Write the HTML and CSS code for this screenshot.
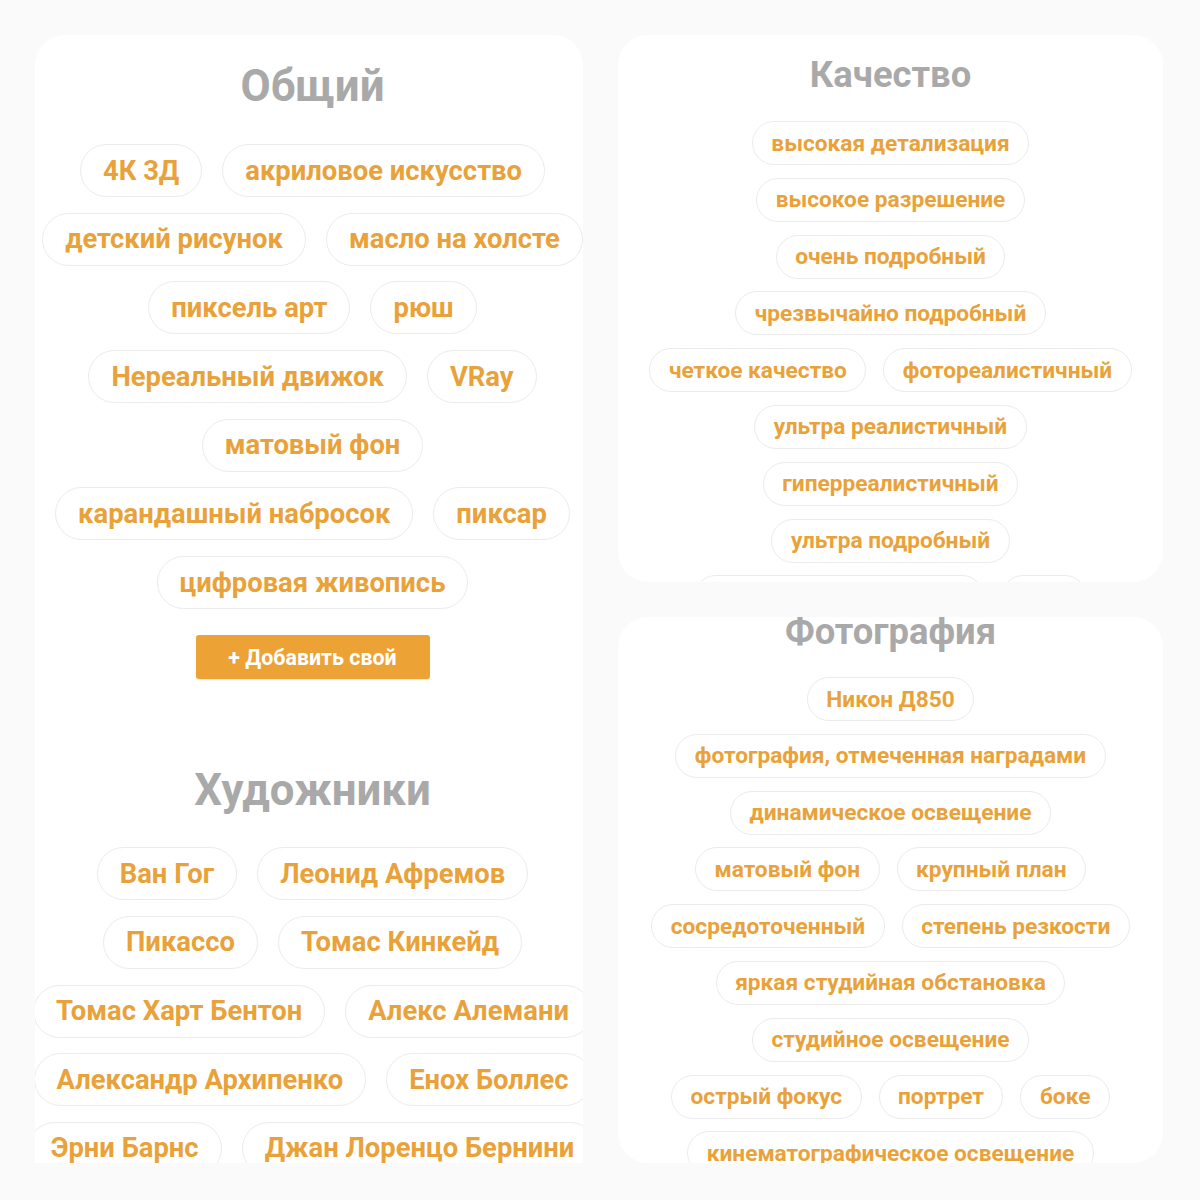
FILE: index.html
```html
<!DOCTYPE html>
<html lang="ru">
<head>
<meta charset="utf-8">
<title>Теги</title>
<link rel="stylesheet" href="styles.css">
</head>
<body>
<div class="page">
  <section class="card card-left">
    <div class="left-inner">
      <h2 class="title-lg title-general">Общий</h2>
      <div class="rows rows-lg">
        <div class="row"><span class="chip">4К 3Д</span><span class="chip">акриловое искусство</span></div>
        <div class="row"><span class="chip">детский рисунок</span><span class="chip">масло на холсте</span></div>
        <div class="row"><span class="chip">пиксель арт</span><span class="chip">рюш</span></div>
        <div class="row"><span class="chip">Нереальный движок</span><span class="chip">VRay</span></div>
        <div class="row"><span class="chip">матовый фон</span></div>
        <div class="row"><span class="chip">карандашный набросок</span><span class="chip">пиксар</span></div>
        <div class="row"><span class="chip">цифровая живопись</span></div>
      </div>
      <div class="btn-wrap"><button class="add-btn">+ Добавить свой</button></div>
      <h2 class="title-lg title-artists">Художники</h2>
      <div class="rows rows-lg">
        <div class="row"><span class="chip">Ван Гог</span><span class="chip">Леонид Афремов</span></div>
        <div class="row"><span class="chip">Пикассо</span><span class="chip">Томас Кинкейд</span></div>
        <div class="row"><span class="chip">Томас Харт Бентон</span><span class="chip">Алекс Алемани</span></div>
        <div class="row"><span class="chip">Александр Архипенко</span><span class="chip">Енох Боллес</span></div>
        <div class="row"><span class="chip">Эрни Барнс</span><span class="chip">Джан Лоренцо Бернини</span></div>
      </div>
    </div>
  </section>
  <div class="col-right">
    <section class="card card-quality">
      <h2 class="title-sm">Качество</h2>
      <div class="rows rows-sm">
        <div class="row"><span class="chip">высокая детализация</span></div>
        <div class="row"><span class="chip">высокое разрешение</span></div>
        <div class="row"><span class="chip">очень подробный</span></div>
        <div class="row"><span class="chip">чрезвычайно подробный</span></div>
        <div class="row"><span class="chip">четкое качество</span><span class="chip">фотореалистичный</span></div>
        <div class="row"><span class="chip">ультра реалистичный</span></div>
        <div class="row"><span class="chip">гиперреалистичный</span></div>
        <div class="row"><span class="chip">ультра подробный</span></div>
        <div class="row row-peek"><span class="chip chip-peek chip-peek-wide"></span><span class="chip chip-peek chip-peek-narrow"></span></div>
      </div>
    </section>
    <section class="card card-photo">
      <h2 class="title-sm title-photo">Фотография</h2>
      <div class="rows rows-sm">
        <div class="row"><span class="chip">Никон Д850</span></div>
        <div class="row"><span class="chip">фотография, отмеченная наградами</span></div>
        <div class="row"><span class="chip">динамическое освещение</span></div>
        <div class="row"><span class="chip">матовый фон</span><span class="chip">крупный план</span></div>
        <div class="row"><span class="chip">сосредоточенный</span><span class="chip">степень резкости</span></div>
        <div class="row"><span class="chip">яркая студийная обстановка</span></div>
        <div class="row"><span class="chip">студийное освещение</span></div>
        <div class="row"><span class="chip">острый фокус</span><span class="chip">портрет</span><span class="chip">боке</span></div>
        <div class="row"><span class="chip">кинематографическое освещение</span></div>
      </div>
    </section>
  </div>
</div>
</body>
</html>
```

FILE: styles.css
```css
* { box-sizing: border-box; }
html, body { margin: 0; padding: 0; }
body {
  background: #fafafa;
  font-family: Roboto, "Noto Sans", "Liberation Sans", sans-serif;
  font-weight: 700;
  width: 1200px;
  height: 1200px;
  overflow: hidden;
}
.page {
  display: flex;
  gap: 35px;
  padding: 35px 37px 0 35px;
  height: 1163px;
}
.card {
  background: #ffffff;
  overflow: hidden;
}
.card-left {
  width: 548px;
  flex: none;
  height: 1128px;
  border-radius: 30px 30px 0 0;
  padding-top: 26px;
}
.left-inner { width: 555px; }
.col-right {
  width: 545px;
  flex: none;
  display: flex;
  flex-direction: column;
  gap: 35px;
}
.card-quality {
  height: 547px;
  border-radius: 30px;
  padding-top: 19px;
}
.card-photo {
  height: 546px;
  border-radius: 30px;
  padding-top: 0;
}
h2 { margin: 0; text-align: center; color: #a9a9a9; font-weight: 700; }
.title-lg { font-size: 43.8px; line-height: 50px; }
.title-general { margin-bottom: 33px; }
.title-artists { margin-top: 86px; margin-bottom: 32px; }
.title-sm { font-size: 36.4px; line-height: 42px; margin-bottom: 25px; }
.title-photo { line-height: 30px; margin-bottom: 30px; }
.rows { display: flex; flex-direction: column; }
.row { display: flex; justify-content: center; flex-wrap: nowrap; }
.chip {
  display: flex;
  align-items: center;
  flex: none;
  white-space: nowrap;
  background: #fff;
  border: 1.5px solid #ebebeb;
  border-radius: 999px;
  color: #e9a23a;
}
.rows-lg { gap: 15.7px; }
.rows-lg .row { gap: 20px; }
.rows-lg .chip { height: 53px; padding: 0 22px; font-size: 27.4px; }
.rows-sm { gap: 12.8px; }
.rows-sm .row { gap: 17px; }
.rows-sm .chip { height: 44px; padding: 0 18.5px; font-size: 22.7px; }
.chip-peek-wide { width: 290px; }
.chip-peek-narrow { width: 86px; }
.btn-wrap { display: flex; justify-content: center; margin-top: 26px; }
.add-btn {
  width: 234px;
  height: 44px;
  border: none;
  border-radius: 3px;
  background: #eca234;
  color: #fff;
  font-family: Roboto, "Noto Sans", "Liberation Sans", sans-serif;
  font-weight: 700;
  font-size: 21.4px;
  padding: 0;
  box-shadow: 0 1px 1px rgba(0,0,0,0.08);
}
```
